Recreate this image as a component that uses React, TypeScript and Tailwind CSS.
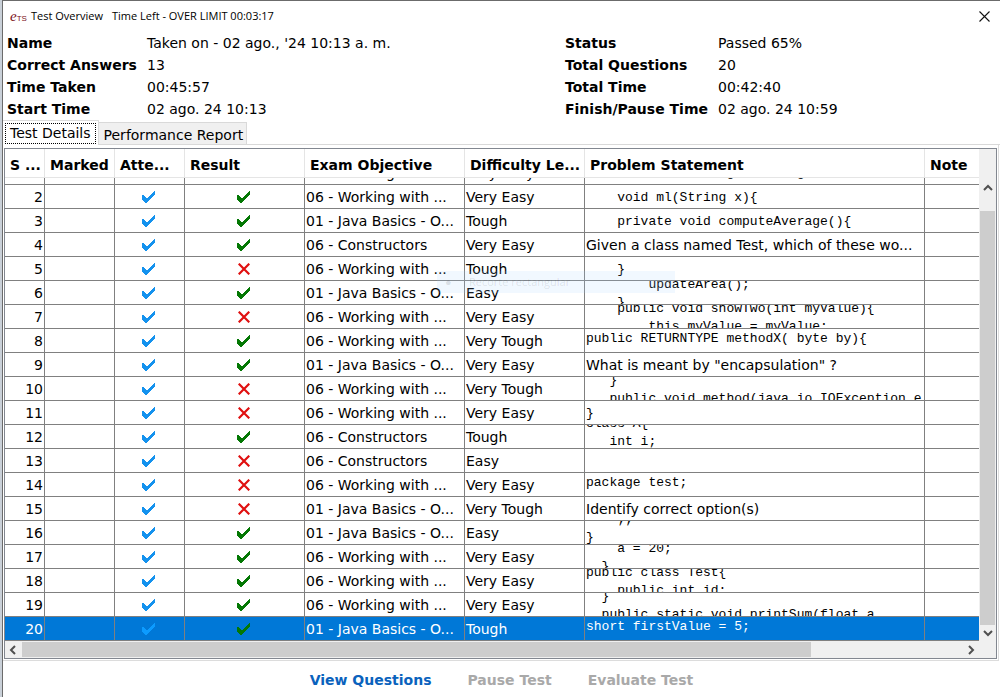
import type { ReactNode } from "react";

type Align = "middle" | "upper" | "lower";

interface Row {
  id: number;
  passed: boolean;
  objective: string;
  difficulty: string;
  text?: string;
  code?: string;
  align?: Align;
}

const WORKING = "06 - Working with ...";
const BASICS = "01 - Java Basics - O...";
const CONSTRUCTORS = "06 - Constructors";

const rows: Row[] = [
  { id: 2, passed: true, objective: WORKING, difficulty: "Very Easy", code: "    void ml(String x){" },
  { id: 3, passed: true, objective: BASICS, difficulty: "Tough", code: "    private void computeAverage(){" },
  { id: 4, passed: true, objective: CONSTRUCTORS, difficulty: "Very Easy", text: "Given a class named Test, which of these wo..." },
  { id: 5, passed: false, objective: WORKING, difficulty: "Tough", code: "    }" },
  { id: 6, passed: true, objective: BASICS, difficulty: "Easy", code: "        updateArea();\n    }" },
  { id: 7, passed: false, objective: WORKING, difficulty: "Very Easy", code: "    public void showTwo(int myValue){\n        this.myValue = myValue;" },
  { id: 8, passed: true, objective: WORKING, difficulty: "Very Tough", code: "public RETURNTYPE methodX( byte by){", align: "upper" },
  { id: 9, passed: true, objective: BASICS, difficulty: "Very Easy", text: 'What is meant by "encapsulation" ?' },
  { id: 10, passed: false, objective: WORKING, difficulty: "Very Tough", code: "   }\n   public void method(java.io.IOException e" },
  { id: 11, passed: false, objective: WORKING, difficulty: "Very Easy", code: "}" },
  { id: 12, passed: true, objective: CONSTRUCTORS, difficulty: "Tough", code: "class A{\n   int i;", align: "lower" },
  { id: 13, passed: false, objective: CONSTRUCTORS, difficulty: "Easy" },
  { id: 14, passed: false, objective: WORKING, difficulty: "Very Easy", code: "package test;", align: "upper" },
  { id: 15, passed: false, objective: BASICS, difficulty: "Very Tough", text: "Identify correct option(s)" },
  { id: 16, passed: true, objective: BASICS, difficulty: "Easy", code: "    ;;\n}", align: "lower" },
  { id: 17, passed: true, objective: WORKING, difficulty: "Very Easy", code: "    a = 20;\n  }" },
  { id: 18, passed: true, objective: WORKING, difficulty: "Very Easy", code: "public class Test{\n    public int id;" },
  { id: 19, passed: true, objective: WORKING, difficulty: "Very Easy", code: "  }\n  public static void printSum(float a," },
  { id: 20, passed: true, objective: BASICS, difficulty: "Tough", code: "short firstValue = 5;", align: "upper" },
];

const headers = ["S ...", "Marked", "Atte...", "Result", "Exam Objective", "Difficulty Le...", "Problem Statement", "Note"];

const alignClass: Record<Align, string> = {
  middle: "items-center pt-[2px]",
  upper: "items-center pb-1",
  lower: "items-end *:-mb-[3px]",
};

function Check({ className, label }: { className: string; label: string }) {
  return (
    <svg width="13" height="12" viewBox="0 0 13 12" className={className} role="img" aria-label={label} shapeRendering="crispEdges">
      <path d="M0 4H1L4 7H5L12 0H13V3L5 12H3L0 8Z" fill="currentColor" />
    </svg>
  );
}

function Cross() {
  return (
    <svg width="12" height="12" viewBox="0 0 12 12" className="text-[#e01010]" role="img" aria-label="Incorrect">
      <path d="M0.7 0.7L11.3 11.3M11.3 0.7L0.7 11.3" stroke="currentColor" strokeWidth="2.2" />
    </svg>
  );
}

function Arrow({ d }: { d: string }) {
  return (
    <svg width="10" height="10" viewBox="0 0 10 10" aria-hidden="true">
      <path d={d} fill="none" stroke="#505050" strokeWidth="2" />
    </svg>
  );
}

function Cell({ children, className = "" }: { children?: ReactNode; className?: string }) {
  return (
    <td className="border-r border-b border-[#808080] p-0 last:border-r-0">
      <div className={`flex h-[23px] overflow-hidden whitespace-pre ${className}`}>{children}</div>
    </td>
  );
}

function ClippedCell({ children }: { children?: ReactNode }) {
  return (
    <td className="border-r border-b border-[#808080] p-0 last:border-r-0">
      <div className="flex h-[6px] items-end overflow-hidden whitespace-pre pb-[3px] pl-px leading-[16px]">{children}</div>
    </td>
  );
}

function Summary() {
  const items: [string, string][] = [
    ["Name", "Taken on - 02 ago., '24 10:13 a. m."],
    ["Status", "Passed 65%"],
    ["Correct Answers", "13"],
    ["Total Questions", "20"],
    ["Time Taken", "00:45:57"],
    ["Total Time", "00:42:40"],
    ["Start Time", "02 ago. 24 10:13"],
    ["Finish/Pause Time", "02 ago. 24 10:59"],
  ];
  return (
    <dl className="grid grid-cols-[140px_418fr_153px_282fr] pl-1 leading-[22px] whitespace-nowrap">
      {items.map(([label, value]) => (
        <div key={label} className="contents">
          <dt className="font-bold">{label}</dt>
          <dd>{value}</dd>
        </div>
      ))}
    </dl>
  );
}

export default function App() {
  return (
    <div className="flex bg-white font-['Verdana','DejaVu_Sans',sans-serif] text-[14px] text-black">
      <div className="w-[2px] shrink-0 bg-[#c9d0d8]" />
      <main className="relative min-w-0 flex-1 border-t border-l border-[#6b6b6b] pb-[5px]">
        <header className="flex h-[31px] items-center pr-[10px] pl-[7px] font-['Segoe_UI','Open_Sans',sans-serif] text-[11px]">
          <span className="w-[21px] font-['Liberation_Serif',serif] text-[15px] leading-none text-[#7b1018] italic">
            e<span className="font-['Liberation_Sans',sans-serif] text-[8px] not-italic">TS</span>
          </span>
          <h1 className="flex gap-[9px] whitespace-nowrap">
            <span>Test Overview</span>
            <span>Time Left - OVER LIMIT 00:03:17</span>
          </h1>
          <button type="button" aria-label="Close" className="ml-auto">
            <svg width="11" height="11" viewBox="0 0 11 11" aria-hidden="true">
              <path d="M0.5 0.5L10.5 10.5M10.5 0.5L0.5 10.5" stroke="#111" strokeWidth="1.1" />
            </svg>
          </button>
        </header>

        <Summary />

        <div role="tablist" className="flex items-end">
          <button type="button" role="tab" aria-selected="true" className="h-[25px] border-t border-r border-[#dcdcdc] p-[2px] pb-px whitespace-nowrap">
            <span className="block border border-dotted border-black px-1 leading-[19px]">Test Details</span>
          </button>
          <button type="button" role="tab" aria-selected="false" className="h-[23px] border-t border-r border-b border-[#d9d9d9] bg-[#f0f0f0] pr-[3px] pl-[5px] leading-[24px] whitespace-nowrap">
            Performance Report
          </button>
          <div className="flex-1 border-b border-[#d9d9d9]" />
        </div>

        <section className="mr-px border-r border-b border-[#dcdcdc] pt-[3px] pr-px pb-px pl-px">
          <div className="border border-[#828790]">
            <div className="flex bg-[#f0f0f0]">
              <table className="min-w-0 flex-1 table-fixed border-separate border-spacing-0 bg-white">
                <colgroup>
                  <col className="w-[40px]" />
                  <col className="w-[70px]" />
                  <col className="w-[70px]" />
                  <col className="w-[120px]" />
                  <col className="w-[160px]" />
                  <col className="w-[120px]" />
                  <col />
                  <col className="w-[54px]" />
                </colgroup>
                <thead>
                  <tr className="h-[29px]">
                    {headers.map((h) => (
                      <th key={h} scope="col" className="overflow-hidden border-r border-b border-[#e5e5e5] p-0 pt-[5px] pl-[5px] text-left font-bold whitespace-nowrap last:border-r-0">
                        {h}
                      </th>
                    ))}
                  </tr>
                </thead>
                <tbody>
                  <tr>
                    <ClippedCell />
                    <ClippedCell />
                    <ClippedCell />
                    <ClippedCell />
                    <ClippedCell>{WORKING}</ClippedCell>
                    <ClippedCell>Very Easy</ClippedCell>
                    <ClippedCell>
                      <code className="font-['Liberation_Mono',monospace] text-[13px]">{"             String + String"}</code>
                    </ClippedCell>
                    <ClippedCell />
                  </tr>
                  {rows.map((r) => {
                    const selected = r.id === 20;
                    return (
                      <tr key={r.id} className={selected ? "bg-[#0078d7] text-white" : "bg-white"}>
                        <Cell className="items-center justify-end pt-[2px] pr-px">{r.id}</Cell>
                        <Cell />
                        <Cell className="items-center justify-center pr-[2px]">
                          <Check className={selected ? "text-[#0c9bff]" : "text-[#1492ee]"} label="Attempted" />
                        </Cell>
                        <Cell className="items-center justify-center pr-[2px]">
                          {r.passed ? <Check className="text-[#047804]" label="Correct" /> : <Cross />}
                        </Cell>
                        <Cell className="items-center pt-[2px] pl-px">{r.objective}</Cell>
                        <Cell className="items-center pt-[2px] pl-px">{r.difficulty}</Cell>
                        {r.code ? (
                          <Cell className={`pl-px ${alignClass[r.align ?? "middle"]}`}>
                            <code className="font-['Liberation_Mono',monospace] text-[13px] leading-[18px]">{r.code}</code>
                          </Cell>
                        ) : (
                          <Cell className="items-center pt-[2px] pl-px">{r.text}</Cell>
                        )}
                        <Cell />
                      </tr>
                    );
                  })}
                </tbody>
              </table>
              <div className="flex w-[17px] shrink-0 flex-col items-center pt-[34px]" aria-hidden="true">
                <Arrow d="M1 7L5 3L9 7" />
                <div className="mt-[18px] w-[15px] flex-1 bg-[#cdcdcd]" />
                <div className="flex h-[16px] items-center">
                  <Arrow d="M1 3L5 7L9 3" />
                </div>
              </div>
            </div>
            <div className="flex h-[17px] items-center bg-[#f0f0f0] pr-[20px] pl-[3px]" aria-hidden="true">
              <Arrow d="M7 1L3 5L7 9" />
              <div className="ml-[4px] flex-1">
                <div className="h-[15px] w-[83.6%] bg-[#cdcdcd]" />
              </div>
              <Arrow d="M3 1L7 5L3 9" />
            </div>
          </div>
        </section>

        <footer className="flex h-[39px] items-center justify-center gap-9 font-bold">
          <button type="button" className="font-bold text-[#0a62bd]">View Questions</button>
          <button type="button" disabled className="text-[#a9a9a9]">Pause Test</button>
          <button type="button" disabled className="text-[#a9a9a9]">Evaluate Test</button>
        </footer>

        <div className="pointer-events-none absolute top-[270px] left-[434px] flex h-[22px] w-[238px] items-center bg-[#a0d0ff]/15 pl-[8px] font-['Segoe_UI','Open_Sans',sans-serif] text-[11px] text-black/10">
          <span className="w-[24px]">●</span>
          <span>Recorte rectangular</span>
        </div>
      </main>
    </div>
  );
}
